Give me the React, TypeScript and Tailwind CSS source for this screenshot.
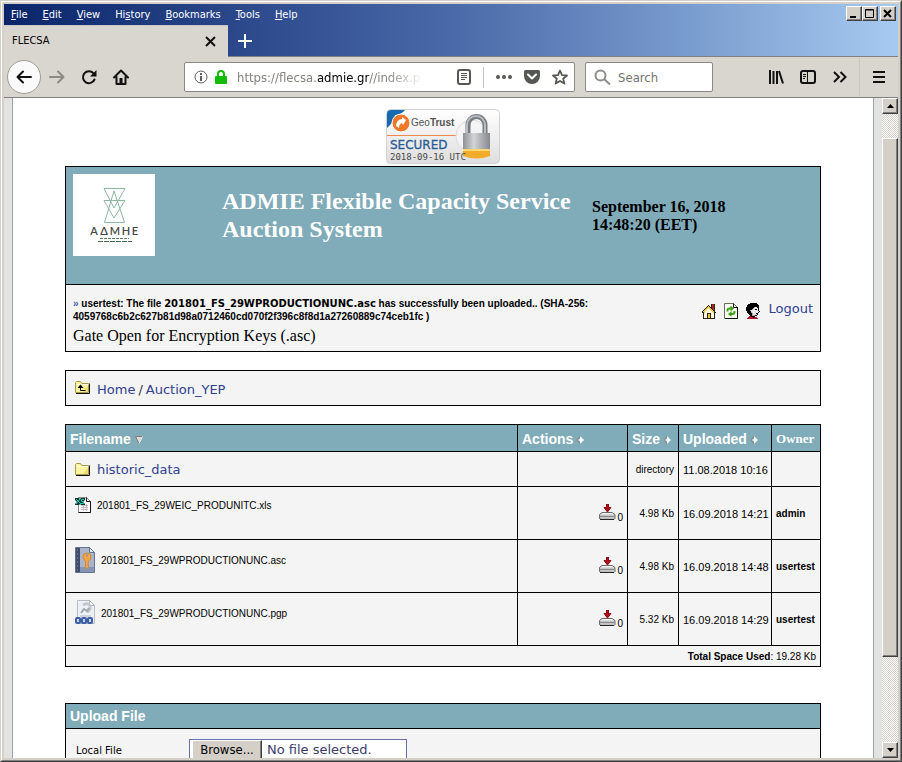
import { useRef } from "react";
import type { ReactNode } from "react";

const sans = "font-['Liberation_Sans',Arial,sans-serif]";
const serif = "font-['Liberation_Serif','Times_New_Roman',serif]";
const verdana = "font-['DejaVu_Sans',Verdana,sans-serif]";
const tahoma = "font-['DejaVu_Sans_Condensed','DejaVu_Sans',Tahoma,sans-serif]";

const raised =
  "border border-t-white border-l-white border-r-[#404040] border-b-[#404040] bg-[#d4d0c8] shadow-[inset_-1px_-1px_0_#808080]";

/* ---------- pixel icons ---------- */

function Pixels({ rows, colors, label }: { rows: string[]; colors: Record<string, string>; label?: string }) {
  const w = rows[0].length;
  const cells: ReactNode[] = [];
  rows.forEach((row, y) => {
    [...row].forEach((c, x) => {
      if (colors[c]) cells.push(<rect key={`${x}-${y}`} x={x} y={y} width="1" height="1" fill={colors[c]} />);
    });
  });
  return (
    <svg width={w} height={rows.length} viewBox={`0 0 ${w} ${rows.length}`} shapeRendering="crispEdges" className="shrink-0" aria-label={label}>
      {cells}
    </svg>
  );
}

const HouseIcon = () => (
  <Pixels
    rows={[
      ".........krrk.",
      "......k..krrk.",
      ".....kyk.krrk.",
      "....kyyykkrrk.",
      "...kyywyykrrk.",
      "..kyywwwyykrk.",
      ".kyywwwwwyykk.",
      "kyywwwwwwwyyk.",
      "kkywwwwwwwwykk",
      ".kwwwkkkkwwwk.",
      ".kwwwkyykwwwk.",
      ".kwwwkyykwwwk.",
      ".kwwwkyykwwwk.",
      ".kwwwkyykwwwk.",
      ".kkkkkkkkkkkk.",
    ]}
    colors={{ k: "#2b2115", y: "#ecc440", w: "#fffbe0", r: "#a52a1c" }}
  />
);

const RefreshIcon = () => (
  <svg width="14" height="16" viewBox="0 0 14 16" className="shrink-0">
    <path d="M.5.5h9l4 4v11H.5z" fill="#fcfff5" stroke="#66705c" />
    <path d="M9.5.5v4h4M13.500 4v11.500H1" fill="none" stroke="#111" />
    <path d="M3.500 8.500V7.500q0-2 2-2H7" fill="none" stroke="#3da013" strokeWidth="2" />
    <path d="M6.500 2.500l3.500 3-3.500 3z" fill="#3da013" />
    <path d="M10.500 8v1q0 2-2 2H7" fill="none" stroke="#3da013" strokeWidth="2" />
    <path d="M7.500 8l-3.500 3 3.500 3z" fill="#3da013" />
  </svg>
);

const UserIcon = () => (
  <Pixels
    rows={[
      "....kkkkkkk...",
      "..kkkkkkkkkk..",
      ".kkkkkkkkkkkk.",
      ".kkkkkkkkkkkk.",
      "kkkkkkkkgwwkk.",
      "kkkkkkkgwwwwk.",
      "kkkkkkgwwkkwk.",
      "kkkkgwwwwwwwk.",
      ".kkkkwwwwwwwwk",
      ".kkkkgwwwwwwk.",
      "..kkkkgwwwkk..",
      "...kkkgwwwwk..",
      "....kkgggkk...",
      "...rrkkkk.....",
      "..rrrrrkrrr...",
      ".rrrrrrrrrrr..",
    ]}
    colors={{ k: "#000000", w: "#eee8e8", g: "#a9a3a5", r: "#b31524" }}
  />
);

function FolderIcon({ up = false }: { up?: boolean }) {
  return (
    <svg width="15" height="14" viewBox="0 0 15 14" className="shrink-0">
      <path d="M.5 12.500V2.500l1-1h4l1.500 2h6.500v9z" fill="#fbf3a0" stroke="#a89a45" />
      <path d="M1.500 4.500h12" stroke="#fffde0" />
      <path d="M8 12l5-6v6z" fill="#f0dc70" />
      <path d="M14.500 3.500v10H1" fill="none" stroke="#111" />
      {up && (
        <>
          <path d="M5.500 6v4.500h5" fill="none" stroke="#000" strokeWidth="1" />
          <path d="M2.500 8l3-3.500 3 3.500z" fill="#000" />
        </>
      )}
    </svg>
  );
}

const XlsIcon = () => (
  <svg width="16" height="16" viewBox="0 0 16 16" className="shrink-0">
    <path d="M3.500.5h8l4 4v11h-12z" fill="#fff" stroke="#8a8a8a" />
    <path d="M11.500.5v4h4v11h-12" fill="none" stroke="#111" />
    <path d="M6 8.500h7M6 10.500h7M6 12.500h7M8.500 7v7M11.500 7v7" stroke="#c9b8c4" />
    <path d="M0 1h4l1 1 1-1h4v2L8 5l2 2v1H6L5 7 4 8H0V7l2-2-2-2z" fill="#063d3a" />
    <path d="M1 2l5 5M5 2L1 7M9 2.500H6.500v2h2v2H6" stroke="#2cc7ac" fill="none" />
  </svg>
);

const AscIcon = () => (
  <svg width="20" height="26" viewBox="0 0 20 26" className="shrink-0">
    <path d="M.5.5h14l5 5v20H.5z" fill="#8795b4" stroke="#68748f" />
    <path d="M5 1h9l5 5v14H5z" fill="#a9b4cb" />
    <path d="M14.500.5v5h5z" fill="#e3e7ef" stroke="#68748f" />
    <path d="M1 1h4v24H1z" fill="#3e4b6b" />
    <path d="M2 3h1M2 7h1M2 11h1M2 15h1M2 19h1M2 23h1" stroke="#8e9ab8" />
    <path d="M12 6q4 0 4 4 0 3-2.500 4v2l-1 1 1 1v2l-1.500 2-1.500-2v-6Q8 13 8 10q0-4 4-4z" fill="#f0a646" stroke="#d0893a" />
    <circle cx="12" cy="8.500" r="1" fill="#8795b4" />
  </svg>
);

const PgpIcon = () => (
  <svg width="20" height="25" viewBox="0 0 20 25" className="shrink-0">
    <path d="M2.500.5h12l5 5v18h-17z" fill="#edf0f4" stroke="#b7bcc4" />
    <path d="M14.500.5v5h5z" fill="#fff" stroke="#a9b0ba" />
    <path d="M8 5q5-3 7 1 1 4-3 6" fill="none" stroke="#c3c8ce" strokeWidth="3" />
    <path d="M6 13l3-4 3 2 2-3" fill="none" stroke="#a1a7af" strokeWidth="2" />
    <path d="M5 15h11v2H5z" fill="#cdd3da" />
    <rect y="17" width="6" height="7" rx="2" fill="#3d5fa6" />
    <rect x="6" y="17" width="6" height="7" rx="2" fill="#3d5fa6" />
    <rect x="12" y="17" width="6" height="7" rx="2" fill="#3d5fa6" />
    <path d="M2 19h2v3H2zM8 19h2v3H8zM14 19h2v3h-2z" fill="#c8d5ef" />
  </svg>
);

const DownloadIcon = () => (
  <svg width="17" height="17" viewBox="0 0 17 17" className="shrink-0">
    <path d="M3 8.500h10l3 2v4l-1 1H2l-1.500-1v-4z" fill="#c4c4c4" stroke="#6a6a6a" />
    <path d="M3.500 9h9.500l2 1.500H1.500z" fill="#f2f2f2" />
    <path d="M1 12.500h14.500" stroke="#8a8a8a" />
    <path d="M1 15.500h14" stroke="#222" />
    <path d="M7.500 0h2v3.500H12l-3.500 4.500L5 3.500h2.500z" fill="#b00d1c" stroke="#8d0913" strokeWidth="1" />
  </svg>
);

const SortBoth = () => (
  <svg width="7" height="8" viewBox="0 0 7 8" className="inline-block">
    <path d="M3 0l4 4-4 4V5L1 4l2-1z" fill="#fff" />
    <path d="M3 0L0 4M0 4l3 4" stroke="#8f8186" fill="none" />
  </svg>
);

const SortDown = () => (
  <svg width="8" height="8" viewBox="0 0 8 8" className="inline-block">
    <path d="M.5.5h7L4 7.500z" fill="#d6dcdc" stroke="#8b7777" />
    <path d="M7.500.5L4 7.500" stroke="#fff" />
  </svg>
);

/* ---------- browser chrome ---------- */

const menus = ["File", "Edit", "View", "History", "Bookmarks", "Tools", "Help"];
const menuKeyIndex = [0, 0, 0, 2, 0, 0, 0];

function TitleBar() {
  return (
    <header className="flex h-[53px] shrink-0 flex-col border-b border-[#808080] bg-linear-to-r from-[#0a246a] via-[#4a69a8] to-[#a6caf0]">
      <div className="flex h-[21px] items-start justify-between">
        <nav className={`${tahoma} flex gap-[15px] pl-[7px] pt-[3px] text-[11px] leading-4 text-white`}>
          {menus.map((m, i) => (
            <button key={m} type="button">
              {m.slice(0, menuKeyIndex[i])}
              <span className="underline">{m[menuKeyIndex[i]]}</span>
              {m.slice(menuKeyIndex[i] + 1)}
            </button>
          ))}
        </nav>
        <div className="flex pr-[2px] pt-[2px]">
          <button type="button" aria-label="Minimize" className={`${raised} flex h-[15px] w-4 items-center justify-center`}>
            <svg width="12" height="11" viewBox="0 0 12 11"><path d="M2 8h6v2H2z" /></svg>
          </button>
          <button type="button" aria-label="Maximize" className={`${raised} mr-[2px] flex h-[15px] w-4 items-center justify-center`}>
            <svg width="12" height="11" viewBox="0 0 12 11"><path d="M1.500 1.500h8v8h-8zM1 2h9" fill="none" stroke="#000" /></svg>
          </button>
          <button type="button" aria-label="Close" className={`${raised} flex h-[15px] w-4 items-center justify-center`}>
            <svg width="12" height="11" viewBox="0 0 12 11"><path d="M2 2l7 7M9 2l-7 7" stroke="#000" strokeWidth="2" /></svg>
          </button>
        </div>
      </div>
      <div className="flex flex-1 items-stretch">
        <div className={`${tahoma} -mb-px flex w-[224px] items-center justify-between border-t border-[#c8c8c8] bg-[#d9d6d0] pl-2 pr-3 text-[11px] text-black`}>
          FLECSA
          <button type="button" aria-label="Close tab">
            <svg width="11" height="11" viewBox="0 0 11 11"><path d="M1 1l9 9M10 1l-9 9" stroke="#111" strokeWidth="2" /></svg>
          </button>
        </div>
        <button type="button" aria-label="New tab" className="px-[10px]">
          <svg width="14" height="14" viewBox="0 0 14 14"><path d="M7 0v14M0 7h14" stroke="#fff" strokeWidth="2" /></svg>
        </button>
      </div>
    </header>
  );
}

function ToolButton({ label, children }: { label: string; children: ReactNode }) {
  return (
    <button type="button" aria-label={label} className="flex h-8 w-8 shrink-0 items-center justify-center">
      {children}
    </button>
  );
}

function NavBar() {
  return (
    <div className="flex h-[41px] shrink-0 items-center border-b border-[#808080] bg-[#d9d6d0] pr-[3px] pl-[3px]">
      <button type="button" aria-label="Back" className="flex size-[34px] shrink-0 items-center justify-center rounded-full border border-[#a09e9a] bg-[#fafafa]">
        <svg width="16" height="16" viewBox="0 0 16 16" fill="none" stroke="#111" strokeWidth="2" strokeLinecap="round" strokeLinejoin="round"><path d="M15 8H1.500M7 2.500L1.500 8 7 13.500" /></svg>
      </button>
      <ToolButton label="Forward">
        <svg width="16" height="16" viewBox="0 0 16 16" fill="none" stroke="#8c8a86" strokeWidth="2" strokeLinecap="round" strokeLinejoin="round"><path d="M1 8h13.500M9 2.500L14.500 8 9 13.500" /></svg>
      </ToolButton>
      <ToolButton label="Reload">
        <svg width="16" height="16" viewBox="0 0 16 16" fill="none" stroke="#111" strokeWidth="2"><path d="M12.500 4.300A6 6 0 1 0 13.500 10.500" strokeLinecap="round" /><path d="M15.500 1v6.500H9z" fill="#111" stroke="none" /></svg>
      </ToolButton>
      <ToolButton label="Home page">
        <svg width="16" height="16" viewBox="0 0 16 16" fill="none" stroke="#111" strokeWidth="2" strokeLinecap="round" strokeLinejoin="round"><path d="M1 8.500L8 1.500l7 7M3.500 8v7h9V8" /><path d="M6.500 9h3v6h-3z" fill="#111" stroke="none" /></svg>
      </ToolButton>
      <div className="ml-[47px] flex h-[30px] min-w-0 flex-1 items-center rounded-[2px] border border-[#8b8983] bg-white pr-[6px] pl-[9px]">
        <svg width="14" height="14" viewBox="0 0 14 14" className="shrink-0"><circle cx="7" cy="7" r="6" fill="none" stroke="#5e5e5e" /><path d="M6 3h2v2H6zM6 6h2v5H6z" fill="#5e5e5e" /></svg>
        <svg width="12" height="14" viewBox="0 0 12 14" className="ml-[7px] shrink-0"><path d="M3 7V4a3 3 0 0 1 6 0v3" fill="none" stroke="#12bc00" strokeWidth="2" /><rect y="6" width="12" height="8" rx="1" fill="#12bc00" /></svg>
        <div className={`${tahoma} ml-[10px] min-w-0 flex-1 overflow-hidden pt-px text-[13px] whitespace-nowrap text-[#85827d]`}>
          <div className="w-[186px] overflow-hidden mask-r-from-[150px] mask-r-to-[186px]">
            https://flecsa.<span className="text-black">admie.gr</span>//index.p
          </div>
        </div>
        <svg width="14" height="16" viewBox="0 0 14 16" className="shrink-0"><rect x="1" y="1" width="12" height="14" rx="2" fill="none" stroke="#555753" strokeWidth="2" /><path d="M4 4.500h6M4 6.500h6M4 8.500h6M4 10.500h4" stroke="#555753" /></svg>
        <span className="mx-3 h-[21px] w-px bg-[#c4c4c4]" />
        <svg width="16" height="4" viewBox="0 0 16 4" className="shrink-0" fill="#555753"><circle cx="2" cy="2" r="2" /><circle cx="8" cy="2" r="2" /><circle cx="14" cy="2" r="2" /></svg>
        <svg width="16" height="14" viewBox="0 0 16 14" className="ml-3 shrink-0"><path d="M1.500 0h13Q16 0 16 1.500V6a8 8 0 0 1-16 0V1.500Q0 0 1.500 0z" fill="#555753" /><path d="M4 4.500l4 4 4-4" fill="none" stroke="#fff" strokeWidth="2" strokeLinecap="round" strokeLinejoin="round" /></svg>
        <svg width="16" height="16" viewBox="0 0 16 16" className="ml-3 shrink-0"><path d="M8 1.500l2 4.600 5 .4-3.800 3.300 1.200 4.800L8 12l-4.400 2.600 1.200-4.800L1 6.500l5-.4z" fill="none" stroke="#555753" strokeWidth="1.800" strokeLinejoin="round" /></svg>
      </div>
      <label className="ml-[10px] flex h-[30px] w-32 shrink-0 items-center gap-[7px] rounded-[2px] border border-[#8b8983] bg-white pl-2">
        <svg width="17" height="16" viewBox="0 0 17 16" className="shrink-0" fill="none" stroke="#8e8e8c" strokeWidth="2"><circle cx="6.500" cy="6.500" r="5" /><path d="M10 10l6 5.500" /></svg>
        <input aria-label="Search" placeholder="Search" className={`${tahoma} w-20 bg-transparent pt-px text-[13px] outline-none placeholder:text-[#75736f]`} />
      </label>
      <div className="ml-[47px] flex items-center">
        <ToolButton label="Library">
          <svg width="16" height="14" viewBox="0 0 16 14" fill="none" stroke="#111" strokeWidth="2"><path d="M2 0v14M5.500 1v13M9 1v13M11 1l4 12.500" /></svg>
        </ToolButton>
        <ToolButton label="Sidebars">
          <svg width="16" height="14" viewBox="0 0 16 14" fill="none" stroke="#111"><rect x="1" y="1" width="14" height="12" rx="2" strokeWidth="2" /><path d="M7.500 1v12M3 4.500h3M3 6.500h3M3 8.500h2" /></svg>
        </ToolButton>
        <ToolButton label="More tools">
          <svg width="14" height="12" viewBox="0 0 14 12" fill="none" stroke="#111" strokeWidth="2"><path d="M1 1l5 5-5 5M7.500 1l5 5-5 5" /></svg>
        </ToolButton>
      </div>
      <span className="mx-[3px] h-[38px] w-px bg-[#c9c6bf]" />
      <ToolButton label="Open menu">
        <svg width="12" height="12" viewBox="0 0 12 12" stroke="#111" strokeWidth="2"><path d="M0 1h12M0 6h12M0 11h12" /></svg>
      </ToolButton>
    </div>
  );
}

function ScrollBar() {
  return (
    <div className="flex w-4 shrink-0 flex-col bg-[repeating-conic-gradient(#ffffff_0_25%,#d4d0c8_0_50%)] bg-size-[2px_2px]">
      <button type="button" aria-label="Scroll up" className={`${raised} flex h-4 items-center justify-center`}>
        <svg width="7" height="4" viewBox="0 0 7 4"><path d="M0 4l3.500-4L7 4z" /></svg>
      </button>
      <div className="h-6" />
      <div className={`${raised} flex-[519]`} />
      <div className="flex-[85]" />
      <button type="button" aria-label="Scroll down" className={`${raised} flex h-4 items-center justify-center`}>
        <svg width="7" height="4" viewBox="0 0 7 4"><path d="M0 0h7L3.500 4z" /></svg>
      </button>
    </div>
  );
}

/* ---------- page ---------- */

function SecuredSeal() {
  return (
    <svg width="114" height="55" viewBox="0 0 114 55" className="mx-auto block" role="img" aria-label="GeoTrust secured">
      <defs>
        <linearGradient id="seal" x1="0" y1="0" x2="0" y2="1">
          <stop offset="0" stopColor="#ffffff" />
          <stop offset="1" stopColor="#dedede" />
        </linearGradient>
        <linearGradient id="lock" x1="0" y1="0" x2="1" y2="0">
          <stop offset="0" stopColor="#8d9095" />
          <stop offset=".4" stopColor="#d2d4d7" />
          <stop offset="1" stopColor="#85888d" />
        </linearGradient>
      </defs>
      <rect x=".5" y=".5" width="113" height="54" rx="4" fill="url(#seal)" stroke="#d2d2d2" />
      <path d="M1 19V5q0-4 4-4h14q-4 5-10 5-1 7-8 13z" fill="#1769b2" />
      <circle cx="15" cy="14" r="9" fill="#f0782a" stroke="#fff" />
      <path d="M10 17q0-6 6-7v-2l4 3-3 5-1-2q-3 1-3 5z" fill="#fff" />
      <path d="M1 26.500h72" stroke="#f0894a" />
      <circle cx="86" cy="27" r="16" fill="#f4f4f4" stroke="#dcdcdc" />
      <path d="M82 26V16a8 8 0 0 1 17 0v10" fill="none" stroke="#777b80" strokeWidth="5" />
      <path d="M81 26V16a9 9 0 0 1 18 0v10" fill="none" stroke="#b9bcc0" strokeWidth="2" />
      <rect x="77" y="24" width="27" height="20" fill="url(#lock)" />
      <path d="M77 41h27v6q-13 5-27 0z" fill="#f3ab2b" />
      <path d="M77 41h27" stroke="#ffd773" strokeWidth="2" />
      <text x="25" y="17" fontSize="10" fill="#555" className={sans}>Geo<tspan fontWeight="700">Trust</tspan></text>
      <text x="4" y="40" fontSize="12" fill="#2a5c94" stroke="#2a5c94" strokeWidth=".3" className={verdana}>SECURED</text>
      <text x="4" y="51" fontSize="9" fill="#4a4a4a" className="font-['DejaVu_Sans_Mono',monospace]">2018-09-16 UTC</text>
    </svg>
  );
}

function AdmieLogo() {
  return (
    <svg width="82" height="82" viewBox="0 0 82 82" className="block shrink-0 bg-white" role="img" aria-label="ΑΔΜΗΕ">
      <g fill="none" stroke="#8db8a0">
        <path d="M31 14.500h21L41 34z" />
        <path d="M31 26.500h21L41 44z" />
        <path d="M41 17L31.500 48.500h20z" />
      </g>
      <g fontSize="11" fontWeight="600" fill="#464646" textAnchor="middle" className="font-[Lato,sans-serif]">
        <text x="21" y="61">Α</text>
        <text x="31" y="61">Δ</text>
        <text x="42" y="61">Μ</text>
        <text x="53" y="61">Η</text>
        <text x="62" y="61">Ε</text>
      </g>
      <path d="M27 64.500h29" stroke="#5c7f69" strokeDasharray="3 1" />
      <path d="M25 67.500h34" stroke="#3f6b50" strokeWidth="1" strokeDasharray="5 1" />
    </svg>
  );
}

const link = "text-[#2f3f91]";
const cell = "border border-black px-1 pt-[2px] pb-0";

const files = [
  { name: "201801_FS_29WEIC_PRODUNITC.xls", icon: <XlsIcon />, size: "4.98 Kb", date: "16.09.2018 14:21", owner: "admin", small: true },
  { name: "201801_FS_29WPRODUCTIONUNC.asc", icon: <AscIcon />, size: "4.98 Kb", date: "16.09.2018 14:48", owner: "usertest", small: false },
  { name: "201801_FS_29WPRODUCTIONUNC.pgp", icon: <PgpIcon />, size: "5.32 Kb", date: "16.09.2018 14:29", owner: "usertest", small: false },
];

function PageHeader() {
  return (
    <section className="mt-[2px] border border-black bg-[#f4f4f4]">
      <div className="flex h-[118px] border-b border-black bg-[#80abb9] pt-[7px] pl-[7px]">
        <AdmieLogo />
        <h1 className={`${serif} ml-[67px] w-[370px] pt-[13px] text-2xl leading-7 font-bold text-white`}>
          ADMIE Flexible Capacity Service Auction System
        </h1>
        <p className={`${serif} pt-6 text-base leading-[18px] font-bold text-black`}>
          September 16, 2018
          <br />
          14:48:20 (EET)
        </p>
      </div>
      <div className="flex h-[66px] justify-between pr-[7px] pl-[7px]">
        <div className="pt-3">
          <p className={`${sans} text-[10px] leading-[13px] font-bold text-black`}>
            <span className="text-[#4a5cc0]">»</span> usertest: The file{" "}
            <span className={`${verdana} text-[10px]`}>201801_FS_29WPRODUCTIONUNC.asc</span> has successfully been uploaded.. (SHA-256:
            <br />
            4059768c6b2c627b81d98a0712460cd070f2f396c8f8d1a27260889c74ceb1fc )
          </p>
          <p className={`${serif} mt-1 text-base leading-[18px] text-black`}>Gate Open for Encryption Keys (.asc)</p>
        </div>
        <div className="flex items-center gap-2 self-start pt-4">
          <a href="#home" aria-label="Home"><HouseIcon /></a>
          <a href="#refresh" aria-label="Refresh"><RefreshIcon /></a>
          <a href="#user" aria-label="User"><UserIcon /></a>
          <a href="#logout" className={`${verdana} ${link} pb-1 text-[13px] leading-4`}>Logout</a>
        </div>
      </div>
    </section>
  );
}

function FileTable() {
  return (
    <table className={`${sans} mt-[18px] w-full table-fixed border-collapse bg-[#f4f4f4] text-[10px] leading-4 text-black`}>
      <colgroup>
        <col />
        <col className="w-[110px]" />
        <col className="w-[51px]" />
        <col className="w-[93px]" />
        <col className="w-[49px]" />
      </colgroup>
      <thead>
        <tr className="h-[27px] bg-[#80abb9] text-left text-sm text-white">
          <th className={cell}>Filename <SortDown /></th>
          <th className={cell}>Actions <SortBoth /></th>
          <th className={`${cell} whitespace-nowrap`}>Size <SortBoth /></th>
          <th className={cell}>Uploaded <SortBoth /></th>
          <th className={`${cell} ${serif} text-[13px]`}>Owner</th>
        </tr>
      </thead>
      <tbody>
        <tr className="h-[35px]">
          <td className={cell}>
            <a href="#historic" className={`${verdana} ${link} flex items-start gap-[7px] pl-[5px] text-[13px]`}>
              <FolderIcon />
              historic_data
            </a>
          </td>
          <td className={cell} />
          <td className={`${cell} pl-0 text-right`}>directory</td>
          <td className={`${cell} text-[11px] whitespace-nowrap`}>11.08.2018 10:16</td>
          <td className={cell} />
        </tr>
        {files.map((f) => (
          <tr key={f.name} className="h-[53px]">
            <td className={`${cell} align-top`}>
              <div className={f.small ? "flex items-center gap-[6px] pt-[7px] pl-[5px]" : "flex items-center gap-[6px] pt-[5px] pl-[5px]"}>
                {f.icon}
                <a href={`#${f.name}`} className="pt-[2px]">{f.name}</a>
              </div>
            </td>
            <td className={cell}>
              <div className="flex items-end justify-end gap-px">
                <button type="button" aria-label={`Download ${f.name}`} className="pb-[3px]"><DownloadIcon /></button>
                <span className="-mb-[2px]">0</span>
              </div>
            </td>
            <td className={`${cell} text-right whitespace-nowrap`}>{f.size}</td>
            <td className={`${cell} text-[11px] whitespace-nowrap`}>{f.date}</td>
            <td className={`${cell} font-bold`}>{f.owner}</td>
          </tr>
        ))}
      </tbody>
      <tfoot>
        <tr className="h-[21px]">
          <td colSpan={5} className={`${cell} text-right`}>
            <b>Total Space Used</b>: 19.28 Kb
          </td>
        </tr>
      </tfoot>
    </table>
  );
}

function UploadForm() {
  const picker = useRef<HTMLInputElement>(null);
  return (
    <form className="mt-9 border border-black bg-[#f4f4f4]">
      <h2 className={`${sans} h-[25px] border-b border-black bg-[#80abb9] pl-1 text-sm leading-[25px] font-bold text-white`}>Upload File</h2>
      <div className="flex items-center pt-[10px] pb-8 pl-[10px]">
        <label htmlFor="local-file" className={`${verdana} w-[113px] text-[10px] text-black`}>Local File</label>
        <div className={`${verdana} flex h-[22px] w-[218px] items-stretch border border-[#6670ad] bg-white pl-[2px] text-[13px]`}>
          <button
            type="button"
            onClick={() => picker.current?.click()}
            className={`${raised} ${tahoma} w-[70px] text-[13px] leading-[18px] text-black`}
          >
            Browse...
          </button>
          <span className="pl-[5px] leading-5 text-[#3b3b6b]">No file selected.</span>
          <input ref={picker} id="local-file" type="file" className="hidden" />
        </div>
      </div>
    </form>
  );
}

export default function App() {
  return (
    <div className="h-screen border border-t-[#d4d0c8] border-r-[#404040] border-b-[#404040] border-l-[#d4d0c8]">
      <div className="h-full border border-t-white border-r-[#808080] border-b-[#808080] border-l-white bg-[#d4d0c8] p-[2px]">
        <div className="flex h-full flex-col overflow-hidden">
          <TitleBar />
          <NavBar />
          <div className="flex min-h-0 flex-1 bg-[#e2e2e0]">
            <main className="ml-2 mr-2 min-w-0 flex-1 overflow-hidden border-x border-[#9aa4ad] bg-white px-[52px] pt-[11px]">
              <SecuredSeal />
              <PageHeader />
              <nav className={`${verdana} mt-[18px] flex h-9 items-start border border-black bg-[#f4f4f4] pt-[9px] pl-[9px] text-[13px] leading-5 text-[#333]`}>
                <a href="#up" aria-label="Parent folder"><FolderIcon up /></a>
                <a href="#home" className={`${link} ml-[7px]`}>Home</a>
                <span className="mx-[3px]">/</span>
                <a href="#auction" className={link}>Auction_YEP</a>
              </nav>
              <FileTable />
              <UploadForm />
            </main>
            <ScrollBar />
          </div>
        </div>
      </div>
    </div>
  );
}
